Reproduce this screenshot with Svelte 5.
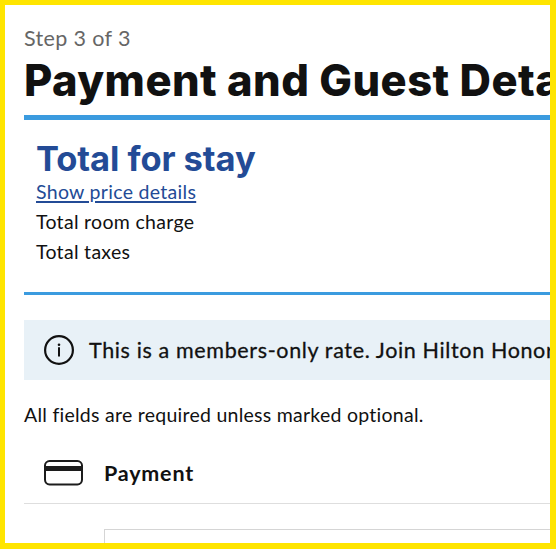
<script>
  const charges = ['Total room charge', 'Total taxes'];
</script>

<main class="frame">
  <p class="step">Step 3 of 3</p>
  <h1>Payment and Guest Details</h1>

  <section class="summary">
    <h2>Total for stay</h2>
    <a href="#details">Show price details</a>
    {#each charges as charge}
      <p>{charge}</p>
    {/each}
  </section>

  <div class="notice">
    <svg width="30" height="30" viewBox="0 0 30 30" aria-hidden="true">
      <circle cx="15" cy="15" r="13.9" fill="none" stroke="#111" stroke-width="2.2" />
      <circle cx="15" cy="9.7" r="1.3" fill="#111" />
      <path d="M15 12.2V21.6" stroke="#111" stroke-width="2" />
    </svg>
    <span>This is a members-only rate. Join Hilton Honors</span>
  </div>

  <p class="required">All fields are required unless marked optional.</p>

  <section class="payment">
    <header>
      <svg width="40" height="26" viewBox="0 0 40 26" aria-hidden="true">
        <rect x="1" y="1" width="37" height="23.4" rx="4.6" fill="none" stroke="#1c1c1c" stroke-width="2" />
        <path d="M1 8.5H38" stroke="#1c1c1c" stroke-width="4.8" />
      </svg>
      <h3>Payment</h3>
    </header>
    <div class="field"></div>
  </section>
</main>

<style>
  :global(body) {
    margin: 0;
    background: #fff;
  }
  .frame {
    box-sizing: border-box;
    width: 556px;
    height: 549px;
    overflow: hidden;
    border: 5px solid #ffe500;
    border-right-width: 6px;
    border-bottom-width: 6px;
    padding: 18px 0 0 19px;
    background: #fff;
    color: #111;
    font-family: Lato, 'Open Sans', sans-serif;
    white-space: nowrap;
  }
  p,
  h1,
  h2,
  h3 {
    margin: 0;
  }
  .step {
    font-size: 21.5px;
    line-height: 30px;
    letter-spacing: 0.36px;
    color: #666;
  }
  h1 {
    height: 62px;
    border-bottom: 5px solid #3b9bdf;
    font-family: Inter, sans-serif;
    font-size: 43.5px;
    font-weight: 800;
    line-height: 55px;
    letter-spacing: 0.45px;
  }
  .summary {
    display: flex;
    flex-direction: column;
    align-items: flex-start;
    box-sizing: border-box;
    height: 175px;
    padding: 19px 0 0 12px;
    border-bottom: 3px solid #3b9bdf;
    font-size: 19.5px;
    line-height: 30px;
    letter-spacing: 0.3px;
  }
  h2 {
    font-family: Inter, sans-serif;
    font-size: 34.5px;
    line-height: 40px;
    font-weight: 700;
    letter-spacing: -0.06px;
    color: #234b96;
  }
  a {
    margin: -1px 0 1px;
    line-height: 28px;
    color: #234b96;
    text-decoration-thickness: 2px;
    text-underline-offset: 2px;
  }
  .notice {
    display: flex;
    align-items: center;
    gap: 15px;
    height: 60px;
    margin-top: 25px;
    padding-left: 20px;
    background: #e8f1f7;
    font-size: 21.5px;
    letter-spacing: 0.64px;
    -webkit-text-stroke: 0.3px #111;
  }
  .notice svg,
  header svg {
    flex: none;
  }
  .required {
    margin-top: 20px;
    font-size: 19.5px;
    line-height: 30px;
    letter-spacing: 0.26px;
  }
  header {
    display: flex;
    align-items: center;
    gap: 20px;
    height: 60px;
    margin-top: 13px;
    padding-left: 20px;
    border-bottom: 1px solid #dedede;
  }
  h3 {
    padding-bottom: 1px;
    font-size: 21.5px;
    line-height: 30px;
    font-weight: 700;
    letter-spacing: 0.8px;
  }
  .field {
    height: 60px;
    margin: 25px 0 0 80px;
    border: 1px solid #d5d5d5;
    border-right: 0;
  }
</style>
